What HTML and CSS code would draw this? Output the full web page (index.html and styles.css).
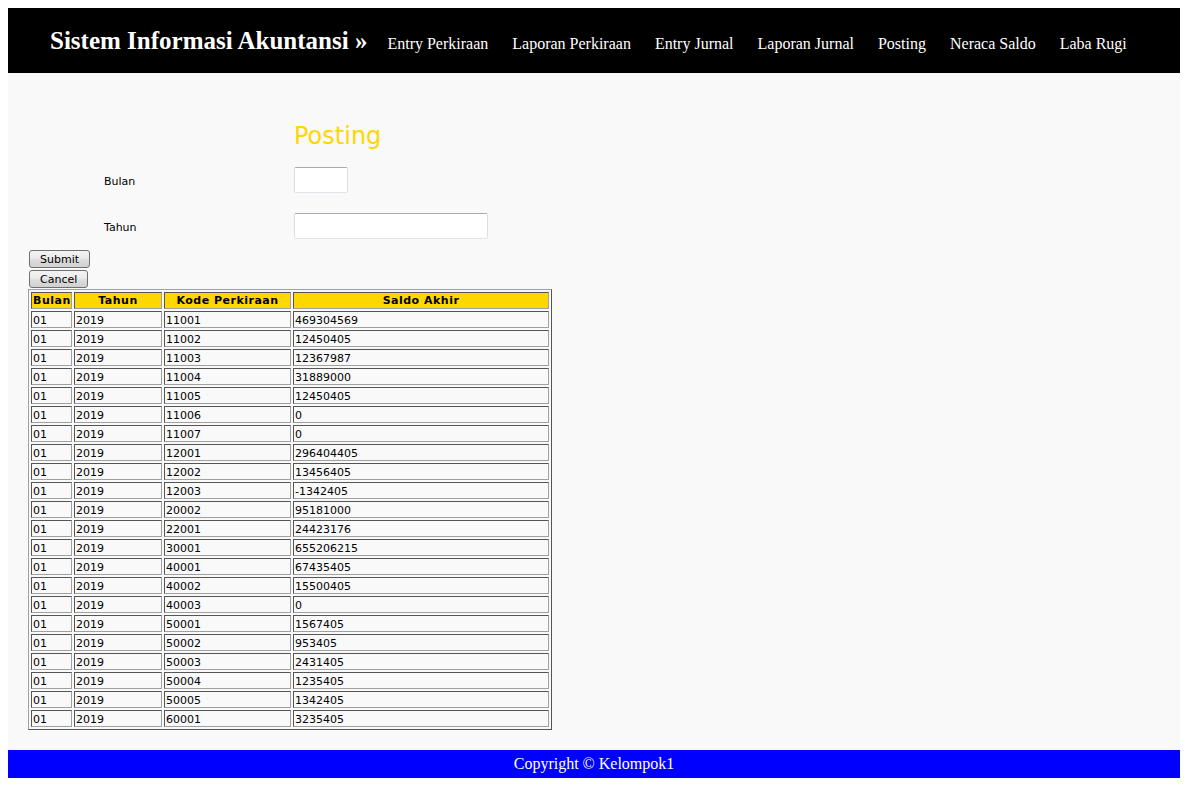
FILE: index.html
```html
<!DOCTYPE html>
<html>
<head>
<meta charset="utf-8">
<title>Posting</title>
<link rel="stylesheet" href="styles.css">
</head>
<body>
<header class="topbar">
  <div class="brand">Sistem Informasi Akuntansi &raquo;</div>
  <nav class="nav">
    <a href="#">Entry Perkiraan</a>
    <a href="#">Laporan Perkiraan</a>
    <a href="#">Entry Jurnal</a>
    <a href="#">Laporan Jurnal</a>
    <a href="#">Posting</a>
    <a href="#">Neraca Saldo</a>
    <a href="#">Laba Rugi</a>
  </nav>
</header>
<main class="main">
  <form class="form">
    <div class="form-grid">
      <div></div>
      <h2 class="title">Posting</h2>
      <label class="lbl row-bulan">Bulan</label>
      <div class="row-bulan"><input class="inp inp-bulan" type="text"></div>
      <label class="lbl row-tahun">Tahun</label>
      <div class="row-tahun"><input class="inp inp-tahun" type="text"></div>
    </div>
    <div class="buttons">
      <button type="button" class="btn">Submit</button>
      <button type="button" class="btn">Cancel</button>
    </div>
  </form>
  <table class="data">
    <thead>
      <tr><th class="c1">Bulan</th><th class="c2">Tahun</th><th class="c3">Kode Perkiraan</th><th class="c4">Saldo Akhir</th></tr>
    </thead>
    <tbody>
      <tr><td>01</td><td>2019</td><td>11001</td><td>469304569</td></tr>
      <tr><td>01</td><td>2019</td><td>11002</td><td>12450405</td></tr>
      <tr><td>01</td><td>2019</td><td>11003</td><td>12367987</td></tr>
      <tr><td>01</td><td>2019</td><td>11004</td><td>31889000</td></tr>
      <tr><td>01</td><td>2019</td><td>11005</td><td>12450405</td></tr>
      <tr><td>01</td><td>2019</td><td>11006</td><td>0</td></tr>
      <tr><td>01</td><td>2019</td><td>11007</td><td>0</td></tr>
      <tr><td>01</td><td>2019</td><td>12001</td><td>296404405</td></tr>
      <tr><td>01</td><td>2019</td><td>12002</td><td>13456405</td></tr>
      <tr><td>01</td><td>2019</td><td>12003</td><td>-1342405</td></tr>
      <tr><td>01</td><td>2019</td><td>20002</td><td>95181000</td></tr>
      <tr><td>01</td><td>2019</td><td>22001</td><td>24423176</td></tr>
      <tr><td>01</td><td>2019</td><td>30001</td><td>655206215</td></tr>
      <tr><td>01</td><td>2019</td><td>40001</td><td>67435405</td></tr>
      <tr><td>01</td><td>2019</td><td>40002</td><td>15500405</td></tr>
      <tr><td>01</td><td>2019</td><td>40003</td><td>0</td></tr>
      <tr><td>01</td><td>2019</td><td>50001</td><td>1567405</td></tr>
      <tr><td>01</td><td>2019</td><td>50002</td><td>953405</td></tr>
      <tr><td>01</td><td>2019</td><td>50003</td><td>2431405</td></tr>
      <tr><td>01</td><td>2019</td><td>50004</td><td>1235405</td></tr>
      <tr><td>01</td><td>2019</td><td>50005</td><td>1342405</td></tr>
      <tr><td>01</td><td>2019</td><td>60001</td><td>3235405</td></tr>
    </tbody>
  </table>
</main>
<footer class="footer">Copyright &copy; Kelompok1</footer>
</body>
</html>
```

FILE: styles.css
```css
html, body {
  background: #ffffff;
}
body {
  margin: 8px;
  font-family: "DejaVu Sans", Verdana, sans-serif;
  color: #000;
}
.topbar {
  background: #000;
  height: 65px;
  display: flex;
  align-items: baseline;
  padding-left: 42px;
  padding-top: 19px;
  box-sizing: border-box;
  font-family: "Liberation Serif", "Times New Roman", serif;
}
.brand {
  color: #fff;
  font-weight: bold;
  font-size: 25px;
  margin-right: 20px;
  white-space: nowrap;
}
.nav {
  display: flex;
  align-items: baseline;
  gap: 24px;
}
.nav a {
  color: #fff;
  text-decoration: none;
  font-size: 16px;
  white-space: nowrap;
}
.main {
  background: #f9f9f9;
  padding: 0 20px 20px 20px;
  overflow: hidden;
}
.form-grid {
  display: grid;
  grid-template-columns: 190px auto;
  margin-left: 76px;
  margin-top: 49px;
  align-items: center;
}
.title {
  margin: 0;
  font-size: 24px;
  line-height: 28px;
  font-weight: normal;
  color: #ffd700;
}
.lbl {
  font-size: 11px;
  padding-top: 2px;
  box-sizing: border-box;
}
.row-bulan {
  margin-top: 17px;
}
.row-tahun {
  margin-top: 20px;
}
.row-bulan, .row-tahun {
  display: flex;
  align-items: center;
  height: 26px;
}
.inp {
  box-sizing: border-box;
  height: 26px;
  background: #fff;
  border: 1px solid;
  border-color: #aaaaaa #dedede #dfe3ea #dedede;
  border-radius: 2px;
  padding: 0 4px;
  outline: none;
  font-family: "DejaVu Sans", sans-serif;
  font-size: 11px;
}
.inp-bulan {
  width: 54px;
}
.inp-tahun {
  width: 194px;
}
.buttons {
  display: flex;
  flex-direction: column;
  align-items: flex-start;
  gap: 2px;
  margin-top: 11px;
  margin-left: 1px;
}
.btn {
  box-sizing: border-box;
  height: 18px;
  padding: 2px 10px 0 10px;
  font-family: "DejaVu Sans", sans-serif;
  font-size: 11px;
  line-height: 14px;
  color: #000;
  border: 1px solid #707070;
  border-radius: 3px;
  background: linear-gradient(#f3f3f3 0%, #ebebeb 45%, #dcdcdc 55%, #d0d0d0 100%);
}
.data {
  margin-top: 1px;
  border-collapse: separate;
  border-spacing: 2px;
  border: 1px solid;
  border-color: #a0a0a0 #555555 #555555 #a0a0a0;
  font-size: 11px;
  line-height: 13px;
  table-layout: fixed;
  width: 524px;
}
.data th, .data td {
  box-sizing: border-box;
  border: 1px solid;
  border-color: #555555 #a0a0a0 #a0a0a0 #555555;
  padding: 1px;
  height: 17px;
  text-align: left;
  white-space: nowrap;
}
.data td {
  padding: 2px 1px 0 1px;
}
.data th {
  background: #ffd700;
  font-weight: bold;
  text-align: center;
  letter-spacing: 0.5px;
}
.c1 { width: 41px; }
.c2 { width: 88px; }
.c3 { width: 127px; }
.c4 { width: 256px; }
.footer {
  background: #0000ff;
  color: #fff;
  text-align: center;
  height: 28px;
  line-height: 28px;
  font-family: "Liberation Serif", "Times New Roman", serif;
  font-size: 16px;
}
```
